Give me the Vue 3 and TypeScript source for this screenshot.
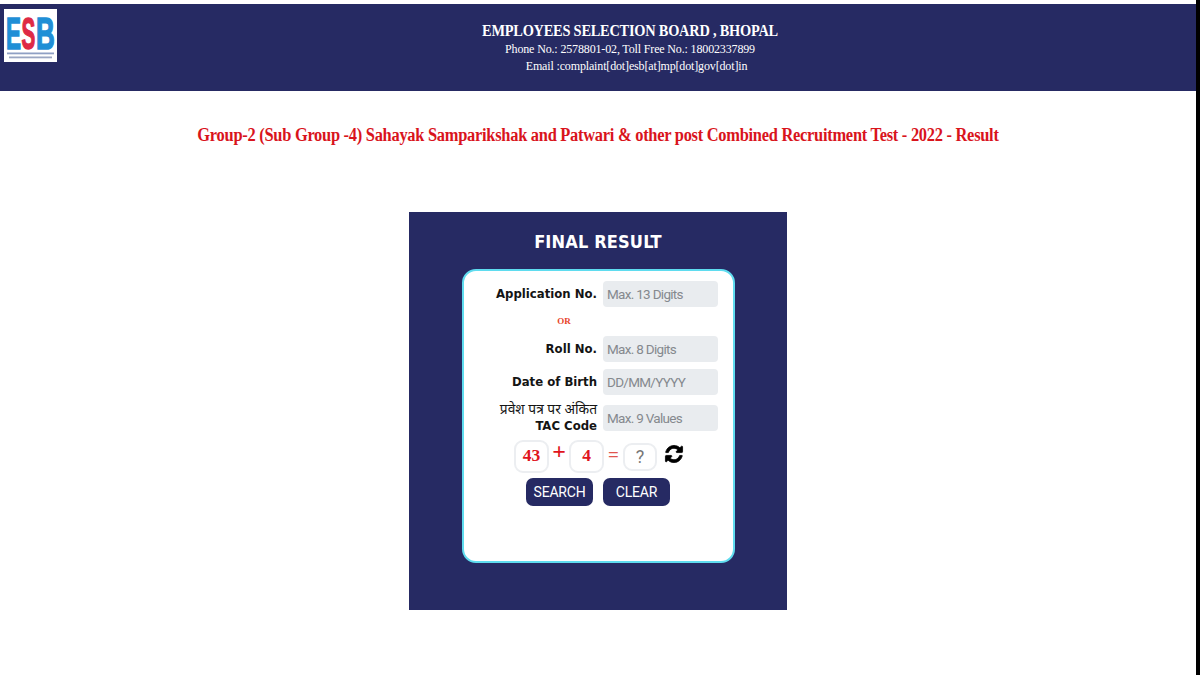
<script setup lang="ts">
interface Field { label: string; placeholder: string }
const appField: Field = { label: 'Application No.', placeholder: 'Max. 13 Digits' }
const rollField: Field = { label: 'Roll No.', placeholder: 'Max. 8 Digits' }
const dobField: Field = { label: 'Date of Birth', placeholder: 'DD/MM/YYYY' }
</script>

<template>
  <div class="page">
    <main class="content">
      <header class="header">
        <svg class="logo" viewBox="0 0 53 53" role="img" aria-label="ESB logo">
          <rect width="53" height="53" fill="#fff" />
          <text transform="translate(2 40) scale(0.51 1)" class="logo-e">E</text>
          <text transform="translate(17.5 40) scale(0.47 1)" class="logo-s">S</text>
          <text transform="translate(32 40) scale(0.59 1)" class="logo-b">B</text>
          <rect x="3" y="43.5" width="47" height="1.8" fill="#8fa0c4" />
          <rect x="5" y="47.5" width="43" height="1.8" fill="#9aa6c2" />
        </svg>
        <div class="org">
          <div class="org-name">EMPLOYEES SELECTION BOARD , BHOPAL</div>
          <div class="org-line">Phone No.: 2578801-02, Toll Free No.: 18002337899</div>
          <div class="org-line email">Email :complaint[dot]esb[at]mp[dot]gov[dot]in</div>
        </div>
      </header>

      <h1 class="title">Group-2 (Sub Group -4) Sahayak Samparikshak and Patwari &amp; other post Combined Recruitment Test - 2022 - Result</h1>

      <section class="card">
        <h2 class="card-title">FINAL RESULT</h2>
        <form class="panel" @submit.prevent>
          <div class="row first">
            <label class="label">{{ appField.label }}</label>
            <input class="input" :placeholder="appField.placeholder" />
          </div>
          <div class="or">OR</div>
          <div class="row">
            <label class="label">{{ rollField.label }}</label>
            <input class="input" :placeholder="rollField.placeholder" />
          </div>
          <div class="row dob">
            <label class="label">{{ dobField.label }}</label>
            <input class="input" :placeholder="dobField.placeholder" />
          </div>
          <div class="row tac">
            <label class="label two-line"><span class="hindi">प्रवेश पत्र पर अंकित</span><br />TAC Code</label>
            <input class="input" placeholder="Max. 9 Values" />
          </div>
          <div class="captcha">
            <span class="num">43</span>
            <span class="plus">+</span>
            <span class="num">4</span>
            <span class="eq">=</span>
            <span class="answer">?</span>
            <svg class="refresh" viewBox="0 0 1792 1792" aria-label="Refresh">
              <path d="M1639 1056q0 5-1 7-64 268-268 434.5t-478 166.5q-146 0-282.5-55t-243.5-157l-129 129q-19 19-45 19t-45-19-19-45v-448q0-26 19-45t45-19h448q26 0 45 19t19 45-19 45l-137 137q71 66 161 102t187 36q134 0 250-65t186-179q11-17 53-117 8-23 30-23h192q13 0 22.5 9.5t9.5 22.5zm25-800v448q0 26-19 45t-45 19h-448q-26 0-45-19t-19-45 19-45l138-138q-148-137-349-137-134 0-250 65t-186 179q-11 17-53 117-8 23-30 23h-199q-13 0-22.5-9.5t-9.5-22.5v-7q65-268 270-434.5t480-166.5q146 0 284 55.5t245 156.5l130-129q19-19 45-19t45 19 19 45z" />
            </svg>
          </div>
          <div class="actions">
            <button type="button" class="btn">SEARCH</button>
            <button type="button" class="btn">CLEAR</button>
          </div>
        </form>
      </section>
    </main>
    <div class="edge"></div>
  </div>
</template>

<style>
html, body { margin: 0; padding: 0; background: #fff; }
</style>

<style scoped>
.page {
  display: flex;
  width: 1200px;
  height: 675px;
  overflow: hidden;
  background: #fff;
}
.content {
  width: 1196px;
  flex: none;
  padding-top: 4px;
  box-sizing: border-box;
}
.edge { flex: 1; background: #000; }

.header {
  height: 86.5px;
  background: #262a63;
  display: flex;
  padding: 5px 0 0 4px;
  box-sizing: border-box;
  color: #fff;
  font-family: "Liberation Serif", serif;
}
.logo { width: 53px; height: 53px; flex: none; }
.logo-e, .logo-b { font: 700 44px "Liberation Sans", sans-serif; fill: #1f8fd6; stroke: #1f8fd6; stroke-width: 1.6px; }
.logo-s { font: 700 44px "Liberation Sans", sans-serif; fill: #de2a45; stroke: #de2a45; stroke-width: 1.4px; }
.org {
  flex: 1;
  margin-left: 7px;
  padding-top: 12px;
  text-align: center;
}
.org-name {
  font-size: 16.5px;
  font-weight: 700;
  line-height: 20px;
  letter-spacing: -0.25px;
  transform: scaleX(0.87);
}
.org-line { font-size: 12px; line-height: 16.5px; letter-spacing: -0.15px; }
.email { padding-left: 13px; }

.title {
  margin: 33px 0 0;
  font: 700 18px/22px "Liberation Serif", serif;
  color: #d9141c;
  text-align: center;
  letter-spacing: -0.3px;
  transform: scaleX(0.913);
}

.card {
  width: 378px;
  height: 397.5px;
  margin: 66.5px 0 0 409px;
  background: #262a63;
  padding-top: 18.5px;
  box-sizing: border-box;
}
.card-title {
  margin: 0;
  font: 700 18px/22px "DejaVu Sans Condensed", "DejaVu Sans", sans-serif;
  font-stretch: condensed;
  letter-spacing: 0.15px;
  color: #fff;
  text-align: center;
}
.panel {
  width: 273px;
  height: 294px;
  margin: 16.5px 0 0 53px;
  padding: 10px 15px 0 0;
  box-sizing: border-box;
  background: #fff;
  border: 2px solid #5fdcef;
  border-radius: 14px;
}
.row { display: flex; justify-content: flex-end; align-items: center; gap: 6px; }
.label {
  font: 700 13px/16px "DejaVu Sans Condensed", "DejaVu Sans", sans-serif;
  font-stretch: condensed;
  color: #141414;
  text-align: right;
}
.hindi { font-family: "Noto Sans", "DejaVu Sans", sans-serif; font-size: 13.8px; font-weight: 400; }
.input {
  width: 115px;
  height: 26px;
  box-sizing: border-box;
  border: 0;
  border-radius: 4px;
  padding: 0 4px;
  background: #e9ecef;
  font: 13.5px "Roboto", sans-serif;
  letter-spacing: -0.7px;
  outline: none;
}
.input::placeholder { color: #85898e; opacity: 1; }
.or {
  width: 200px;
  margin-top: 9px;
  height: 20px;
  font: 700 9px/11px "Liberation Serif", serif;
  color: #e8432a;
  text-align: center;
}
.row.dob { margin-top: 7px; }
.row.tac { margin-top: 6px; }
.captcha {
  display: flex;
  align-items: flex-start;
  margin: 6px 0 0 50px;
  height: 34px;
  font-family: "Liberation Serif", serif;
}
.num {
  width: 35px;
  height: 33px;
  border: 2px solid #eceef1;
  border-radius: 9px;
  box-sizing: border-box;
  color: #e0141c;
  font-weight: 700;
  font-size: 17.5px;
  line-height: 27.5px;
  text-align: center;
}
.plus { width: 20px; color: #e0141c; font-size: 24px; font-weight: 700; line-height: 22px; text-align: center; }
.eq { width: 19px; color: #e0564f; font-size: 19px; font-weight: 700; line-height: 29px; text-align: center; }
.answer {
  width: 34px;
  height: 28px;
  margin-top: 3px;
  border: 2px solid #eceef1;
  border-radius: 9px;
  box-sizing: border-box;
  color: #777;
  font: 18px/23px "Roboto", sans-serif;
  text-align: center;
}
.refresh { width: 20px; height: 20px; margin: 3.5px 0 0 6.5px; fill: #000; stroke: #000; stroke-width: 70; }
.actions { display: flex; gap: 10px; margin: 4px 0 0 62px; }
.btn {
  width: 67px;
  height: 27.5px;
  padding: 0;
  border: 0;
  border-radius: 7px;
  background: #262a63;
  color: #fff;
  font: 14px "Roboto", sans-serif;
  letter-spacing: -0.2px;
}
</style>
